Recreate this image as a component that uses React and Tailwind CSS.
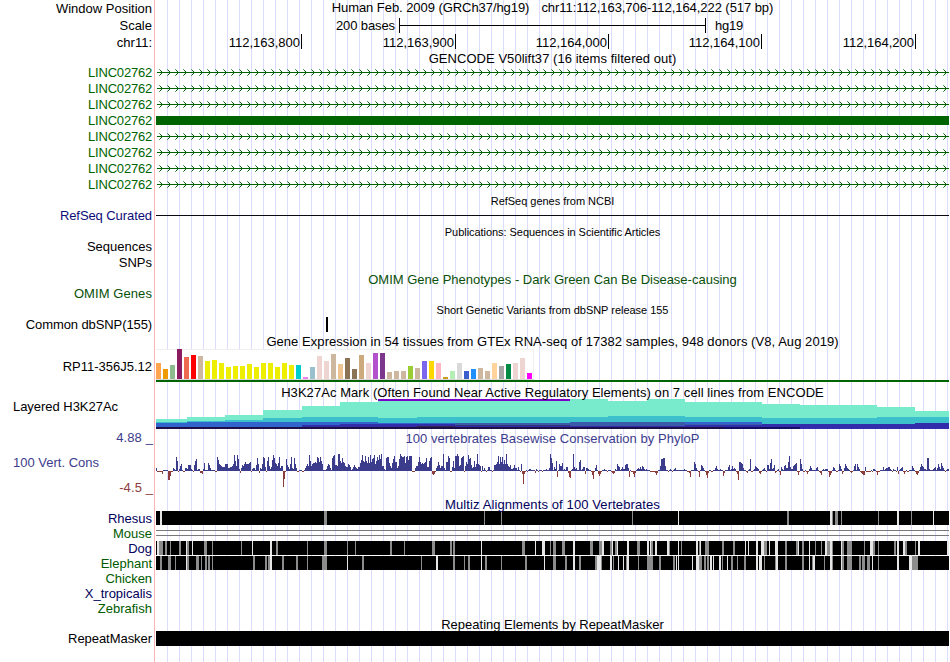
import React from "react";

const LEFT = 156;
const WIDTH = 793;

// Each list starts at a pixel column and gives one signed height per column.
const PHYLOP = [
  [156, "3 -1 -1 -1 -1 -1 -3 1 1 1 1 1 -9 -9 -5 -1 -1 3 2 1 3 10"],
  [176, "14 1 -1 2 5 7 1 -1 -1 3 3 2 6 6 6 2 1 -1 6 10 12 1 2 2"],
  [200, "-2 -2 -3 2 8 1 1 1 8 6 3 1 1 1 1 -1 -1 14 11 7 6 5 4 4"],
  [224, "4 7 7 7 3 3 4 4 5 7 16 10 5 16 12 2 -2 3 6 5 7 9 7 7 7 8"],
  [250, "9 -1 2 3 3 1 6 13 7 -2 3 2 7 14 13 4 -1 10 14 5 2 4 11 16"],
  [274, "13 8 7 5 8 14 3 5 5 -16 -8 -1 12 6 4 2 7 14 3 2 13 7 3 -1"],
  [298, "-1 1 1 1 -1 -1 1 3 5 7 5 16 10 5 7 8 8 9 8 14 13 9 14 10"],
  [322, "7 1 1 1 2 5 7 6 3 1 13 15 16 6 6 5 17 17 10 8 13 9 8 5 4"],
  [347, "4 7 6 4 1 2 4 6 4 3 2 4 4 8 11 16 10 9 15 10 8 14 8 16 9"],
  [372, "12 13 16 7 10 14 11 16 12 17 5 5 2 1 13 14 14 8 5 3 8 12"],
  [394, "15 9 9 3 5 12 17 15 14 14 15 8 14 15 11 15 15 15 -1 -1 -1"],
  [415, "3 5 5 9 14 9 7 8 7 8 9 13 4 4 10 13 14 -3 -4 -3 -1 3 5 9"],
  [439, "6 3 5 5 17 3 1 9 9 15 13 -1 -1 4 10 3 15 15 17 15 5 6 13"],
  [462, "14 15 -1 5 9 7 16 12 13 6 3 4 10 4 7 17 7 6 5 -1 5 1 3 1"],
  [486, "-1 1 4 4 1 1 -1 1 6 6 7 9 15 7 14 9 14 7 11 7 17 7 5 4 6"],
  [511, "2 2 3 6 3 3 1 4 1 -1 7 -3 -13 -3 -1 1 -1 1 2 2 1 1 1 1"],
  [535, "-2 2 1 -1 1 1 1 -1 1 1 1 2 1 1 3 17 13 8 1 4 2 10 -6 1 7 5"],
  [561, "5 8 1 2 1 4 4 -2 -6 -7 1 2 17 4 2 3 1 1 9 11 1 2 4 4 -3 3"],
  [587, "3 2 1 1 -1 -4 -8 -1 3 6 1 -3 -5 -3 -1 1 1 2 1 1 -1 1 1 1"],
  [611, "-1 -2 -3 -2 2 1 7 5 4 1 2 4 2 2 6 7 7 3 -6 1 -1 -1 -3 -6"],
  [635, "-2 1 2 3 2 4 2 5 4 2 1 2 1 1 1 -1 -1 -1 -1 -1 -2 -4 -2 1"],
  [659, "1 5 12 12 13 13 5 1 1 -1 1 2 1 -1 1 2 3 1 1 1 1 1 1 1 1"],
  [684, "2 1 1 -1 -1 -2 -6 1 1 1 9 7 3 1 -1 -6 1 6 5 3 1 -1 -4 -7"],
  [708, "-2 1 1 -1 -1 1 1 3 5 2 1 1 2 1 1 -5 -2 1 1 1 4 6 1 2 5 2"],
  [734, "3 2 -1 -3 -9 9 9 8 7 3 1 1 -1 -2 1 2 12 -1 -1 1 2 5 4 3 2"],
  [759, "-2 -3 -1 1 2 3 1 -1 6 6 2 8 12 2 3 6 -2 -1 1 2 -1 -4 4 2"],
  [783, "1 5 6 3 3 9 15 4 2 2 5 6 7 8 -1 -4 -1 12 7 2 -1 -1 1"],
  [806, "-1 -3 -1 2 5 3 1 1 1 1 3 4 1 -1 -2 -4 1 2 1 2 2 2 -1 -6 -4 -2 1"],
  [833, "4 3 1 -1 -1 1 7 5 2 -3 -1 3 7 5 3 2 1 -1 -2 -1 1 5 7 1 7"],
  [858, "4 2 -1 -2 -3 -4 -4 4 -1 -1 -1 -1 -1 1 -1 2 2 1 -1 -4 -1 -1"],
  [880, "1 1 1 4 1 2 3 3 4 4 2 1 -1 2 1 1 -1 4 -3 1 2 3 4 -1 -3 -1"],
  [906, "1 -1 -1 1 1 1 5 3 1 -1 -3 -4 -2 1 4 7 5 4 2 2 1 13 13 2 1"],
  [931, "1 1 2 3 4 1 3 7 4 2 8 5 3 1 -1 1 2 2"],
].flatMap(([start, s]) => s.split(" ").map((v, i) => [start + i, Number(v)]));

const TISSUES = [
  ["#ffa54f", 16], ["#ee9a00", 10], ["#8fbc8f", 14], ["#8b1c62", 30], ["#ee6a50", 22], ["#ff0000", 24],
  ["#cdb79e", 23], ["#eeee00", 18], ["#eeee00", 19], ["#eeee00", 16], ["#eeee00", 12], ["#eeee00", 13],
  ["#eeee00", 13], ["#eeee00", 15], ["#eeee00", 12], ["#eeee00", 16], ["#eeee00", 16], ["#eeee00", 12],
  ["#eeee00", 16], ["#eeee00", 14], ["#00cdcd", 14], ["#ee82ee", 2], ["#9ac0cd", 12], ["#eed5d2", 23],
  ["#eed5d2", 18], ["#cdb79e", 25], ["#eec591", 15], ["#8b7355", 21], ["#8b7355", 10], ["#cdaa7d", 24],
  ["#eed5d2", 16], ["#b452cd", 26], ["#7a378b", 26], ["#cdb79e", 7], ["#cdb79e", 8], ["#cdb79e", 8],
  ["#9acd32", 13], ["#cdb79e", 11], ["#7a67ee", 18], ["#ffd700", 18], ["#ffb6c1", 16], ["#cd9b1d", 2],
  ["#b4eeb4", 8], ["#d9d9d9", 16], ["#3a5fcd", 8], ["#1e90ff", 10], ["#cdb79e", 11], ["#cdb79e", 8],
  ["#ffd39b", 16], ["#a6a6a6", 13], ["#008b45", 15], ["#eed5d2", 16], ["#eed5d2", 21], ["#ff00ff", 6],
];

const RHESUS = "160w2 324g3 484g1 501g1 632g1 678w1 787g2 830w2 832g1 835g3 841g1 878g1 897w2 911g1 933w1";
const DOG =
  "157w2 159g4 165g2 170g1 179g2 186w1 187g2 192w1 204g3 212g1 241g1 252w1 270w2 276g2 307g1 324g3 347g1 355g1 390g2 404g1 432g3 450g2 453g2 481w1 522g3 535w1 542w3 550g1 553g3 562g3 573w2 590g3 599g3 602w2 610g2 612w1 615g2 617w1 627w2 637g3 647w2 650w1 651g2 655w2 667w2 669g1 678w1 681g1 696w2 699g1 700w1 705g4 722g2 733g2 745w1 748w1 756w2 761w3 764g3 769w1 775w3 785g2 796g2 798w1 802g2 809w1 815g1 821g1 825w2 827g3 830w2 832g1 841w1 842g2 847g5 864g1 870w3 873g2 878g1 894g2 897w2 903w2 905g2 915g1 918w2 947w2";
const ELEPHANT =
  "160g2 168g3 175g1 186w1 187g2 196g3 201g1 205g2 208g2 212g1 253g2 265g2 268g2 270w2 282g2 296g2 307g1 322g5 347w1 362g2 421g1 436w2 453g2 464g1 468g2 481w1 485g2 501g1 525g2 544w1 553g3 565g2 573w2 579g2 595g2 597w4 601g1 610w2 613g1 618w1 623w1 626g1 627w2 638g1 647g6 659g2 673g2 676w1 678w1 692w1 696w3 699g3 704g2 707g2 710w2 713w1 719w2 722g1 727w1 731g2 737g1 744g2 756w2 759w3 764g1 775g1 776w2 785g2 802g2 809w1 812g1 813w2 824g1 830w2 832g1 841w1 842g2 847g5 859g2 862g3 867g3 872w1 878g1 897w2 909w3 912g6";

function Row({ h, label, color = "text-black", labelClass = "", children }) {
  return (
    <div className="relative flex shrink-0" style={{ height: h }}>
      <div
        className={`flex w-[152px] shrink-0 items-center justify-end whitespace-pre text-[13px] leading-none ${color} ${labelClass}`}
      >
        {label}
      </div>
      <div className="ml-1 w-[793px] shrink-0">{children}</div>
    </div>
  );
}

function Title({ h, small, color = "text-black", className = "", children }) {
  return (
    <div className="relative z-10 flex shrink-0 pl-[156px]" style={{ height: h }}>
      <div
        className={`flex w-[793px] items-center justify-center whitespace-pre leading-none ${
          small ? "text-[11px]" : "text-[13px]"
        } ${color} ${className}`}
      >
        {children}
      </div>
    </div>
  );
}

function Drawing({ h, children }) {
  return (
    <svg className="block" width={WIDTH} height={h} viewBox={`${LEFT} 0 ${WIDTH} ${h}`} shapeRendering="crispEdges">
      {children}
    </svg>
  );
}

function Grid() {
  const lines = [];
  for (let x = 167; x < 949; x += 12) lines.push(x);
  return (
    <svg className="absolute inset-0" width="950" height="662" shapeRendering="crispEdges">
      <rect x="154" width="1" height="662" fill="#ffb4b4" />
      {lines.map((x) => (
        <rect key={x} x={x} width="1" height="662" fill="#dcdcff" />
      ))}
    </svg>
  );
}

function Intron() {
  let dark = "";
  let light = "";
  for (let x = 159; x < 949; x += 8) {
    light += `M${x} 5h1v1h-1zM${x} 11h1v1h-1z`;
    dark += `M${x + 1} 6h1v1h-1zM${x + 2} 7h1v1h-1zM${x + 2} 9h1v1h-1zM${x + 1} 10h1v1h-1z`;
  }
  return (
    <Drawing h={16}>
      <rect x="157" y="8" width="792" height="1" fill="#006400" />
      <path d={light} fill="#5aa05a" />
      <path d={dark} fill="#006400" />
    </Drawing>
  );
}

function Alignment({ marks }) {
  return (
    <Drawing h={14}>
      <rect x="156" width="793" height="14" fill="#000" />
      {marks.split(" ").map((m) => {
        const [, x, tone, w] = m.match(/(\d+)([wg])(\d+)/);
        return <rect key={m} x={x} width={w} height="14" fill={tone === "w" ? "#e6e6e6" : "#8c8c8c"} />;
      })}
    </Drawing>
  );
}

function Layer({ fill, steps }) {
  let d = `M${steps[0][0]} 30`;
  steps.forEach(([x, y], i) => {
    const end = i + 1 < steps.length ? steps[i + 1][0] : 949;
    d += `L${x} ${y - 399}L${end} ${y - 399}`;
  });
  return <path d={d + "L949 30Z"} fill={fill} />;
}

const TICKS = [
  { text: "112,163,800", width: "w-[146px]" },
  { text: "112,163,900", width: "w-[154px]" },
  { text: "112,164,000", width: "w-[153px]" },
  { text: "112,164,100", width: "w-[153px]" },
  { text: "112,164,200", width: "w-[154px]" },
];

const GENE = { label: "LINC02762", color: "text-[#006400]", labelClass: "tracking-[-0.2px]" };

export default function App() {
  return (
    <div className="relative h-[662px] w-[950px] overflow-hidden bg-white font-['Liberation_Sans',Arial,sans-serif]">
      <Grid />
      <div className="relative flex flex-col">
        <Row h={17} label="Window Position">
          <div className="flex h-[15px] items-center justify-center whitespace-pre text-[13px] leading-none tracking-[-0.06px]">
            <span>Human Feb. 2009 (GRCh37/hg19)</span>
            <span className="ml-3">chr11:112,163,706-112,164,222 (517 bp)</span>
          </div>
        </Row>
        <Row h={17} label="Scale">
          <div className="flex h-4 items-center text-[13px] leading-none">
            <span className="w-[243px] pr-1 text-right tracking-[-0.1px]">200 bases</span>
            <svg width="307" height="15" className="block" shapeRendering="crispEdges">
              <path d="M0 0h1v15h-1zM306 0h1v15h-1zM0 7h306v1H0z" />
            </svg>
            <span className="ml-[9px] tracking-[-0.2px]">hg19</span>
          </div>
        </Row>
        <Row h={17} label="chr11:">
          <div className="flex h-[15px]">
            {TICKS.map((t) => (
              <div
                key={t.text}
                className={`flex shrink-0 items-center justify-end border-r border-black pr-px pt-px text-[13px] leading-none ${t.width}`}
              >
                {t.text}
              </div>
            ))}
          </div>
        </Row>
        <Title h={13} className="pt-[2px] tracking-[0.05px]">GENCODE V50lift37 (16 items filtered out)</Title>
        <Row h={16} {...GENE}><Intron /></Row>
        <Row h={16} {...GENE}><Intron /></Row>
        <Row h={16} {...GENE}><Intron /></Row>
        <Row h={16} {...GENE}>
          <div className="mt-1 h-[9px] bg-[#006400]" />
        </Row>
        <Row h={16} {...GENE}><Intron /></Row>
        <Row h={16} {...GENE}><Intron /></Row>
        <Row h={16} {...GENE}><Intron /></Row>
        <Row h={16} {...GENE}><Intron /></Row>
        <Title h={16} small className="pt-[3px] tracking-[-0.03px]">RefSeq genes from NCBI</Title>
        <Row h={15} label="RefSeq Curated" color="text-[#0c0c78]" labelClass="tracking-[-0.08px]">
          <div className="mt-[7px] h-px bg-[#0a0a14]" />
        </Row>
        <Title h={16} small className="pt-[3px] tracking-[-0.05px]">Publications: Sequences in Scientific Articles</Title>
        <Row h={16} label="Sequences" labelClass="pb-[2px]" />
        <Row h={16} label="SNPs" labelClass="pb-[2px]" />
        <Title h={16} color="text-[#0a500a]" className="pt-px">
          OMIM Gene Phenotypes - Dark Green Can Be Disease-causing
        </Title>
        <Row h={14} label="OMIM Genes" color="text-[#0a500a]" labelClass="pb-[2px] tracking-[0.08px]" />
        <Title h={16} small className="pt-[3px] tracking-[-0.03px]">Short Genetic Variants from dbSNP release 155</Title>
        <Row h={15} label="Common dbSNP(155)" labelClass="tracking-[-0.1px]">
          <div className="ml-[170px] h-[15px] w-[2px] bg-black" />
        </Row>
        <Title h={17} className="pt-px tracking-[0.055px]">
          Gene Expression in 54 tissues from GTEx RNA-seq of 17382 samples, 948 donors (V8, Aug 2019)
        </Title>
        <Row h={36} label="RP11-356J5.12" labelClass="pb-[2px]">
          <Drawing h={36}>
            <rect x="156" width="378" height="31" fill="#f0f0f0" />
            <rect x="156" y="1" width="377" height="29" fill="#fff" />
            <rect x="156" y="30" width="378" height="1" fill="#d8d8d8" />
            {TISSUES.map(([fill, h], i) => (
              <rect key={i} x={156 + i * 7} y={30 - h} width="5" height={h} fill={fill} />
            ))}
            <rect x="156" y="31" width="793" height="2" fill="#006400" />
          </Drawing>
        </Row>
        <Title h={14} className="tracking-[0.06px]">H3K27Ac Mark (Often Found Near Active Regulatory Elements) on 7 cell lines from ENCODE</Title>
        <Row h={32} label="Layered H3K27Ac" labelClass="pr-[34px] pb-[17px] tracking-[-0.03px]">
          <Drawing h={30}>
            <Layer fill="#78ebcd" steps={[[156, 419], [187, 417], [225, 415], [263, 410], [302, 406], [340, 402], [378, 401], [570, 399], [608, 401], [647, 399], [685, 402], [762, 404], [800, 405], [877, 407], [915, 411]]} />
            <Layer fill="#3cc0cc" steps={[[156, 422], [187, 421], [225, 420], [263, 418], [302, 417], [378, 418], [417, 417], [570, 417], [608, 416], [685, 417], [762, 418], [877, 417]]} />
            <Layer fill="#3264cd" steps={[[156, 423], [187, 422], [378, 423], [570, 422], [647, 422], [762, 424]]} />
            <Layer fill="#3c5aaa" steps={[[455, 423], [570, 422], [647, 422], [685, 424], [762, 424]]} />
            <Layer fill="#322daa" steps={[[156, 427], [302, 425], [340, 424], [455, 425], [570, 426], [685, 425], [762, 424], [915, 423]]} />
            <rect x="417" y="27" width="38" height="1" fill="#322850" />
            <rect x="455" y="26" width="115" height="1" fill="#373078" />
            <rect x="156" y="28" width="568" height="2" fill="#1e0f46" />
            <rect x="724" y="28" width="76" height="2" fill="#140f64" />
            <rect x="378" y="0" width="192" height="2" fill="#7800c8" />
          </Drawing>
        </Row>
        <div className="flex h-[67px]">
          <div className="flex w-[155px] shrink-0 flex-col text-[13px] leading-none text-[#3c3c8c]">
            <div className="h-[24px] pr-[2px] text-right tracking-[0.1px]">4.88 _</div>
            <div className="h-[26px] pl-[13px] pt-px">100 Vert. Cons</div>
            <div className="pr-[2px] text-right text-[#8c3c3c] tracking-[0.1px]">-4.5 _</div>
          </div>
          <div className="ml-px w-[793px] shrink-0">
            <div className="flex h-[16px] items-center justify-center whitespace-pre pb-[2px] text-[13px] leading-none tracking-[0.04px] text-[#3c3c8c]">
              100 vertebrates Basewise Conservation by PhyloP
            </div>
            <Drawing h={50}>
              {PHYLOP.map(([x, v], i) => (
                <rect
                  key={i}
                  x={x}
                  y={v > 0 ? 24 - v : 24}
                  width="1"
                  height={Math.abs(v)}
                  fill={v > 0 ? "#3c3c8c" : "#8c3c3c"}
                />
              ))}
            </Drawing>
          </div>
        </div>
        <Title h={13} color="text-[#00005a]" className="tracking-[0.11px]">Multiz Alignments of 100 Vertebrates</Title>
        <Row h={15} label="Rhesus" color="text-[#00005a]"><Alignment marks={RHESUS} /></Row>
        <Row h={15} label="Mouse" color="text-[#005a00]">
          <div className="pt-[4px]">
            <div className="h-[6px] border-y border-[#787878]" />
          </div>
        </Row>
        <Row h={15} label="Dog" color="text-[#00005a]"><Alignment marks={DOG} /></Row>
        <Row h={15} label="Elephant" color="text-[#005a00]"><Alignment marks={ELEPHANT} /></Row>
        <Row h={15} label="Chicken" color="text-[#005a00]" labelClass="tracking-[-0.05px]" />
        <Row h={15} label="X_tropicalis" color="text-[#00005a]" />
        <Row h={15} label="Zebrafish" color="text-[#005a00]" />
        <Title h={15} className="pt-[2px]">Repeating Elements by RepeatMasker</Title>
        <Row h={15} label="RepeatMasker" labelClass="tracking-[-0.05px]">
          <div className="h-[15px] bg-black" />
        </Row>
      </div>
    </div>
  );
}
